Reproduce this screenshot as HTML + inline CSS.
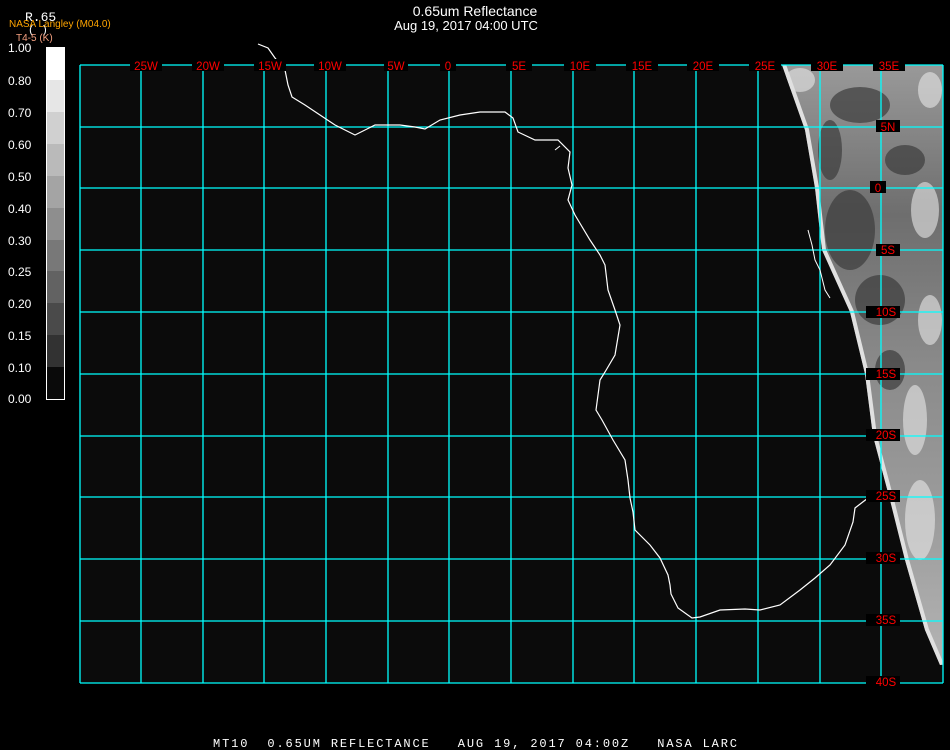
<!DOCTYPE html>
<html><head><style>
html,body{margin:0;padding:0;background:#000;}
svg{display:block}
text{font-family:"Liberation Sans",sans-serif}
.m{font-family:"Liberation Mono",monospace}
</style></head><body>
<svg width="950" height="750" viewBox="0 0 950 750">
<rect width="950" height="750" fill="#000"/>
<rect x="80" y="65" width="863" height="618" fill="#0b0b0b"/>
<defs>
<linearGradient id="g" x1="0" y1="0" x2="0" y2="1">
<stop offset="0" stop-color="#999"/><stop offset="0.25" stop-color="#6e6e6e"/><stop offset="0.5" stop-color="#8a8a8a"/><stop offset="0.8" stop-color="#a0a0a0"/><stop offset="1" stop-color="#b4b4b4"/>
</linearGradient>
<clipPath id="c"><polygon points="782,65 943,65 943,665 940,665 925,630 905,560 890,500 873,436 865,374 850,312 822,250 815,188 805,130"/></clipPath>
</defs>
<polygon points="782,65 943,65 943,665 940,665 925,630 905,560 890,500 873,436 865,374 850,312 822,250 815,188 805,130" fill="url(#g)"/>
<g clip-path="url(#c)">
<g fill="#3c3c3c" opacity="0.7">
<ellipse cx="860" cy="105" rx="30" ry="18"/><ellipse cx="850" cy="230" rx="25" ry="40"/><ellipse cx="880" cy="300" rx="25" ry="25"/><ellipse cx="905" cy="160" rx="20" ry="15"/><ellipse cx="830" cy="150" rx="12" ry="30"/><ellipse cx="890" cy="370" rx="15" ry="20"/>
</g>
<g fill="#e8e8e8" opacity="0.6"><ellipse cx="925" cy="210" rx="14" ry="28"/><ellipse cx="915" cy="420" rx="12" ry="35"/><ellipse cx="930" cy="90" rx="12" ry="18"/><ellipse cx="800" cy="80" rx="15" ry="12"/><ellipse cx="920" cy="520" rx="15" ry="40"/><ellipse cx="930" cy="320" rx="12" ry="25"/></g>
<polyline fill="none" stroke="#e0e0e0" stroke-width="8" points="782,65 805,130 815,188 822,250 850,312 865,374 873,436 890,500 905,560 925,630 940,665"/>
</g>
<g stroke="#00ffff" stroke-width="1.3" fill="none">
<path d="M80 65V683M141 65V683M203 65V683M264 65V683M326 65V683M388 65V683M449 65V683M511 65V683M573 65V683M634 65V683M696 65V683M758 65V683M820 65V683M881 65V683M943 65V683"/>
<path d="M80 65H943M80 127H943M80 188H943M80 250H943M80 312H943M80 374H943M80 436H943M80 497H943M80 559H943M80 621H943M80 683H943"/>
</g>
<polyline fill="none" stroke="#fff" stroke-width="1.2" points="258,44 268,48 275,58 285,70 288,85 292,97 305,105 320,115 335,125 345,130 355,135 365,130 375,125 400,125 415,127 425,129 440,120 460,115 480,112 505,112 513,118 518,132 535,140 558,140 570,152 568,168 572,185 568,200 575,215 590,240 600,255 605,265 608,290 615,310 620,325 615,355 605,372 600,380 596,410 602,420 613,440 625,460 628,480 630,498 633,512 635,530 650,545 660,558 668,575 670,585 671,594 678,608 692,618 700,617 720,610 745,609 760,610 780,605 800,590 815,578 830,565 845,545 853,522 855,508 868,498"/>
<polyline fill="none" stroke="#fff" stroke-width="1" points="808,230 812,245 815,260 820,270 825,290 830,298"/>
<polyline fill="none" stroke="#fff" stroke-width="1" points="555,150 560,146"/>
<g fill="#ff0000" class="m" font-size="11.5">
<g fill="#000"><rect x="130" y="59" width="32" height="12"/><rect x="192" y="59" width="32" height="12"/><rect x="254" y="59" width="32" height="12"/><rect x="314" y="59" width="32" height="12"/><rect x="384" y="59" width="24" height="12"/><rect x="440" y="59" width="16" height="12"/><rect x="506" y="59" width="26" height="12"/><rect x="564" y="59" width="32" height="12"/><rect x="626" y="59" width="32" height="12"/><rect x="687" y="59" width="32" height="12"/><rect x="749" y="59" width="32" height="12"/><rect x="811" y="59" width="32" height="12"/><rect x="873" y="59" width="32" height="12"/>
<rect x="876" y="120" width="24" height="12"/><rect x="870" y="181" width="16" height="12"/><rect x="876" y="244" width="24" height="12"/><rect x="866" y="306" width="34" height="12"/><rect x="866" y="368" width="34" height="12"/><rect x="866" y="429" width="34" height="12"/><rect x="866" y="490" width="34" height="12"/><rect x="866" y="552" width="34" height="12"/><rect x="866" y="614" width="34" height="12"/><rect x="866" y="676" width="34" height="12"/></g>
<text x="146" y="70" text-anchor="middle">25W</text><text x="208" y="70" text-anchor="middle">20W</text><text x="270" y="70" text-anchor="middle">15W</text><text x="330" y="70" text-anchor="middle">10W</text><text x="396" y="70" text-anchor="middle">5W</text><text x="448" y="70" text-anchor="middle">0</text><text x="519" y="70" text-anchor="middle">5E</text><text x="580" y="70" text-anchor="middle">10E</text><text x="642" y="70" text-anchor="middle">15E</text><text x="703" y="70" text-anchor="middle">20E</text><text x="765" y="70" text-anchor="middle">25E</text><text x="827" y="70" text-anchor="middle">30E</text><text x="889" y="70" text-anchor="middle">35E</text>
<text x="888" y="131" text-anchor="middle">5N</text><text x="878" y="192" text-anchor="middle">0</text><text x="888" y="254" text-anchor="middle">5S</text><text x="886" y="316" text-anchor="middle">10S</text><text x="886" y="378" text-anchor="middle">15S</text><text x="886" y="439" text-anchor="middle">20S</text><text x="886" y="500" text-anchor="middle">25S</text><text x="886" y="562" text-anchor="middle">30S</text><text x="886" y="624" text-anchor="middle">35S</text><text x="886" y="686" text-anchor="middle">40S</text>
</g>
<text x="475" y="16" fill="#fff" font-size="14" text-anchor="middle">0.65um Reflectance</text>
<text x="466" y="30" fill="#fff" font-size="13" text-anchor="middle">Aug 19, 2017 04:00 UTC</text>
<text x="25" y="21" fill="#fff" class="m" font-size="13">R.65</text>
<text x="28" y="33" fill="#fff" class="m" font-size="11">( )</text>
<text x="9" y="27" fill="#ffa500" font-size="10">NASA Langley (M04.0)</text>
<text x="16" y="41" fill="#f4a080" font-size="10">T4-5 (K)</text>
<g>
<rect x="46" y="47" width="19" height="33" fill="#fff"/>
<rect x="46" y="80" width="19" height="32" fill="#e6e6e6"/>
<rect x="46" y="112" width="19" height="32" fill="#d0d0d0"/>
<rect x="46" y="144" width="19" height="32" fill="#bababa"/>
<rect x="46" y="176" width="19" height="32" fill="#a4a4a4"/>
<rect x="46" y="208" width="19" height="32" fill="#8e8e8e"/>
<rect x="46" y="240" width="19" height="31" fill="#787878"/>
<rect x="46" y="271" width="19" height="32" fill="#626262"/>
<rect x="46" y="303" width="19" height="32" fill="#4a4a4a"/>
<rect x="46" y="335" width="19" height="32" fill="#323232"/>
<rect x="46" y="367" width="19" height="33" fill="#0a0a0a"/>
<rect x="46.5" y="47.5" width="18" height="352" fill="none" stroke="#fff" stroke-width="1"/>
</g>
<g fill="#fff" class="m" font-size="12">
<text x="8" y="52">1.00</text><text x="8" y="85">0.80</text><text x="8" y="117">0.70</text><text x="8" y="149">0.60</text><text x="8" y="181">0.50</text><text x="8" y="213">0.40</text><text x="8" y="245">0.30</text><text x="8" y="276">0.25</text><text x="8" y="308">0.20</text><text x="8" y="340">0.15</text><text x="8" y="372">0.10</text><text x="8" y="403">0.00</text>
</g>
<text x="213" y="747" fill="#fff" class="m" font-size="12" textLength="524" lengthAdjust="spacing" xml:space="preserve">MT10  0.65UM REFLECTANCE   AUG 19, 2017 04:00Z   NASA LARC</text>
</svg>
</body></html>
